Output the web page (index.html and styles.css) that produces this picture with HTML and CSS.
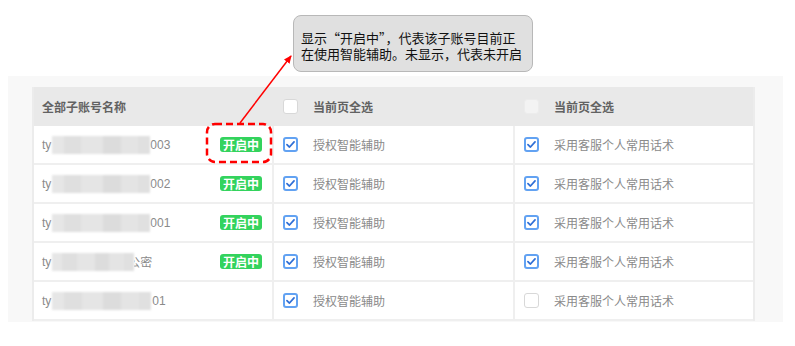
FILE: index.html
```html
<!DOCTYPE html>
<html lang="zh-CN">
<head>
<meta charset="utf-8">
<link rel="stylesheet" href="styles.css">
</head>
<body>
<div class="panel">
  <div class="table">
    <div class="row head">
      <div class="cell c1"><span class="htext">全部子账号名称</span></div>
      <div class="cell c2"><span class="cb empty"></span><span class="htext">当前页全选</span></div>
      <div class="cell c3"><span class="cb disabled"></span><span class="htext">当前页全选</span></div>
    </div>
    <div class="row">
      <div class="cell c1"><span class="name">ty<span class="mask"></span>003</span><span class="badge">开启中</span></div>
      <div class="cell c2"><span class="cb on"><svg viewBox="0 0 15 15"><polyline points="3.4,7.6 6.3,10.4 11.6,4.4"/></svg></span><span class="txt">授权智能辅助</span></div>
      <div class="cell c3"><span class="cb on"><svg viewBox="0 0 15 15"><polyline points="3.4,7.6 6.3,10.4 11.6,4.4"/></svg></span><span class="txt">采用客服个人常用话术</span></div>
    </div>
    <div class="row">
      <div class="cell c1"><span class="name">ty<span class="mask"></span>002</span><span class="badge">开启中</span></div>
      <div class="cell c2"><span class="cb on"><svg viewBox="0 0 15 15"><polyline points="3.4,7.6 6.3,10.4 11.6,4.4"/></svg></span><span class="txt">授权智能辅助</span></div>
      <div class="cell c3"><span class="cb on"><svg viewBox="0 0 15 15"><polyline points="3.4,7.6 6.3,10.4 11.6,4.4"/></svg></span><span class="txt">采用客服个人常用话术</span></div>
    </div>
    <div class="row">
      <div class="cell c1"><span class="name">ty<span class="mask"></span>001</span><span class="badge">开启中</span></div>
      <div class="cell c2"><span class="cb on"><svg viewBox="0 0 15 15"><polyline points="3.4,7.6 6.3,10.4 11.6,4.4"/></svg></span><span class="txt">授权智能辅助</span></div>
      <div class="cell c3"><span class="cb on"><svg viewBox="0 0 15 15"><polyline points="3.4,7.6 6.3,10.4 11.6,4.4"/></svg></span><span class="txt">采用客服个人常用话术</span></div>
    </div>
    <div class="row">
      <div class="cell c1"><span class="name">ty<span class="mask short"></span><span class="cut">公</span>密</span><span class="badge">开启中</span></div>
      <div class="cell c2"><span class="cb on"><svg viewBox="0 0 15 15"><polyline points="3.4,7.6 6.3,10.4 11.6,4.4"/></svg></span><span class="txt">授权智能辅助</span></div>
      <div class="cell c3"><span class="cb on"><svg viewBox="0 0 15 15"><polyline points="3.4,7.6 6.3,10.4 11.6,4.4"/></svg></span><span class="txt">采用客服个人常用话术</span></div>
    </div>
    <div class="row">
      <div class="cell c1"><span class="name">ty<span class="mask long"></span>01</span></div>
      <div class="cell c2"><span class="cb on"><svg viewBox="0 0 15 15"><polyline points="3.4,7.6 6.3,10.4 11.6,4.4"/></svg></span><span class="txt">授权智能辅助</span></div>
      <div class="cell c3"><span class="cb empty"></span><span class="txt">采用客服个人常用话术</span></div>
    </div>
  </div>
</div>

<div class="tip"><div class="tl">显示“开启中”，代表该子账号目前正</div><div class="tl">在使用智能辅助。未显示，代表未开启</div></div>

<svg class="annot" viewBox="0 0 795 346" width="795" height="346">
  <defs>
    <marker id="ah" markerWidth="8" markerHeight="8" refX="7" refY="4" orient="auto" markerUnits="userSpaceOnUse">
      <path d="M0,0.5 L8,4 L0,7.5 Z" fill="#ff0000"/>
    </marker>
  </defs>
  <line x1="240" y1="123" x2="291" y2="56" stroke="#ff0000" stroke-width="1.5" marker-end="url(#ah)"/>
  <rect x="207" y="124" width="64" height="38" rx="8" ry="8" fill="none" stroke="#ff0000" stroke-width="2.5" stroke-dasharray="7 4"/>
</svg>
</body>
</html>
```

FILE: styles.css
```css
html, body {
  margin: 0;
  padding: 0;
  background: #ffffff;
}

body {
  width: 795px;
  height: 346px;
  position: relative;
  overflow: hidden;
  font-family: "Liberation Sans", "Noto Sans CJK SC", sans-serif;
  font-size: 12px;
}

.panel {
  margin: 76px 0 0 8px;
  width: 775px;
  background: #f8f8f8;
  padding: 11px 0 1px 24px;
  box-sizing: border-box;
}

.table {
  width: 723px;
  border-left: 2px solid #ececec;
  border-right: 2px solid #ececec;
  box-sizing: border-box;
}

.row {
  display: grid;
  grid-template-columns: 240px 241px 1fr;
  height: 39px;
  box-sizing: border-box;
  background: #ffffff;
  border-bottom: 2px solid #efefef;
}

.row.head {
  background: #e9e9e9;
  border-bottom: none;
}

.cell {
  display: flex;
  align-items: center;
  box-sizing: border-box;
  border-right: 2px solid #efefef;
  min-width: 0;
}

.head .cell {
  border-right: none;
}

.cell.c3 {
  border-right: none;
}

.c1 {
  padding: 0 10px 0 8px;
  justify-content: space-between;
}

.c2, .c3 {
  padding-left: 9px;
}

.htext {
  font-weight: bold;
  color: #626262;
  font-size: 12px;
}

.c2 .htext, .c3 .htext {
  margin-left: 15px;
}

.name {
  color: #8a8a8a;
  font-size: 12px;
  display: flex;
  align-items: center;
  white-space: nowrap;
}

.mask {
  display: inline-block;
  width: 98px;
  height: 18px;
  margin-left: 1px;
  background:
    linear-gradient(90deg, #e6e6e6 0 12%, #dfdfdf 12% 30%, #e5e5e5 30% 52%, #dcdcdc 52% 70%, #e4e4e4 70% 88%, #e0e0e0 88% 100%);
  filter: blur(1px);
}

.mask.short {
  width: 82px;
}

.mask.long {
  width: 99px;
  margin-right: 1px;
}

.cut {
  display: inline-block;
  width: 6px;
  overflow: hidden;
  direction: rtl;
  text-align: right;
}

.badge {
  background: #33d35d;
  color: #ffffff;
  font-weight: bold;
  font-size: 12px;
  line-height: 15px;
  height: 15px;
  padding: 0 3px;
  border-radius: 3px;
  font-family: "Noto Sans CJK SC", sans-serif;
}

.cb {
  width: 15px;
  height: 15px;
  box-sizing: border-box;
  border-radius: 3px;
  background: #ffffff;
  flex: none;
  display: inline-flex;
  align-items: center;
  justify-content: center;
}

.cb.on {
  border: 2px solid #62a2f2;
}

.cb.on svg {
  width: 13px;
  height: 13px;
  flex: none;
}

.cb.on polyline {
  fill: none;
  stroke: #2f6fd6;
  stroke-width: 2;
  stroke-linecap: round;
  stroke-linejoin: round;
}

.cb.empty {
  border: 1px solid #d8d8d8;
}

.cb.disabled {
  border: 1px solid #ececec;
  background: #f3f3f3;
}

.txt {
  margin-left: 15px;
  color: #8a8a8a;
  font-size: 12px;
  font-family: "Noto Sans CJK SC", sans-serif;
}

.tip {
  position: absolute;
  left: 293px;
  top: 15px;
  width: 240px;
  height: 57px;
  box-sizing: border-box;
  background: #e0e0e0;
  border: 1px solid #b8b8b8;
  border-radius: 8px;
  padding: 14px 0 0 7px;
  font-family: "Noto Sans CJK SC", sans-serif;
  font-size: 13px;
  color: #111111;
  white-space: nowrap;
}

.tl {
  height: 16px;
  line-height: 16px;
  overflow: visible;
}

.annot {
  position: absolute;
  left: 0;
  top: 0;
  pointer-events: none;
}
```
